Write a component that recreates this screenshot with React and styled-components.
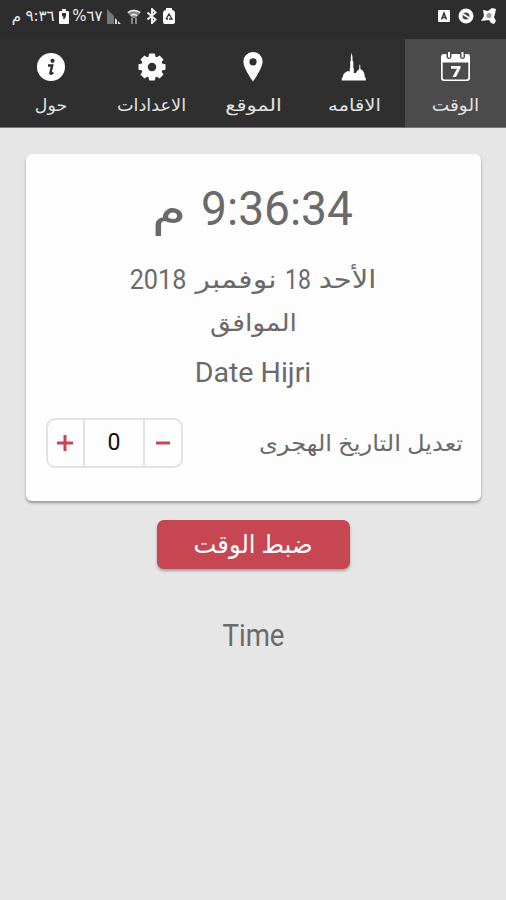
import React from 'react';
import styled, { createGlobalStyle } from 'styled-components';

const GlobalStyle = createGlobalStyle`
  * {
    box-sizing: border-box;
  }
  body {
    margin: 0;
    background-color: #e6e6e6;
    font-family: Roboto, 'DejaVu Sans', sans-serif;
  }
  button {
    padding: 0;
    border: 0;
    background: none;
    font: inherit;
  }
`;

const tabs = [
  { id: 'time', label: 'الوقت', width: 47, stretch: 1.09, active: true },
  { id: 'iqama', label: 'الاقامه', width: 53, stretch: 1.15 },
  { id: 'location', label: 'الموقع', width: 57, stretch: 1.24 },
  { id: 'settings', label: 'الاعدادات', width: 69, stretch: 1.04 },
  { id: 'about', label: 'حول', width: 32, stretch: 1.02 },
];

const TabIcon = ({ id }) => {
  switch (id) {
    case 'time':
      return (
        <Icon width="32" height="32" viewBox="0 0 32 32">
          <path d="M5 3h24q2 0 2 3v21q0 3-3 3H5q-3 0-3-3V6q0-3 3-3z" />
          <path fill="#4b4b4b" d="M3.700 11.500h25.600v15.200q0 1.800-2 1.800H5.700q-2 0-2-1.800z" />
          <path fill="#4b4b4b" d="M7.500 2h5v4q-.5 2-2.500 2T7.500 6zM21 2h5v4q-.5 2-2.500 2T21 6z" />
          <path d="M9 1h2v5.500H9zM22.500 1h2v5.500h-2z" />
          <path d="M12 15h9.500v2l-4.500 9h-3.500l4.500-8.200h-6z" />
        </Icon>
      );
    case 'iqama':
      return (
        <Icon width="32" height="32" viewBox="0 0 32 32">
          <path d="M13.500 1.500l1 4.500v4h.8v7h.5v5h2q.7-2 3.500-4v-3.500l.5-1 .5 1V18q4.500 2 4.500 8l1 1v2.500H3.800V27l1-1q0-4 5-6l2 .5V17h.4v-7h.6V6z" />
        </Icon>
      );
    case 'location':
      return (
        <Icon width="32" height="32" viewBox="0 0 32 32">
          <path
            fillRule="evenodd"
            d="M16 1a9.6 9.6 0 0 0-9.6 9.6C6.400 17.500 16 30.500 16 30.500s9.600-13 9.600-19.900A9.600 9.600 0 0 0 16 1zm0 6.200a3.600 3.600 0 1 1 0 7.200 3.600 3.600 0 0 1 0-7.200z"
          />
        </Icon>
      );
    case 'settings':
      return (
        <Icon width="32" height="32" viewBox="0 0 32 32">
          <circle cx="16" cy="16" r="7.500" fill="none" stroke="#fff" strokeWidth="6.500" />
          {[0, 45, 90, 135, 180, 225, 270, 315].map((angle) => (
            <path key={angle} d="M13.200 2.500h5.600l1 5h-7.600z" transform={`rotate(${angle} 16 16)`} />
          ))}
        </Icon>
      );
    default:
      return (
        <Icon width="32" height="32" viewBox="0 0 32 32">
          <circle cx="16" cy="16" r="14" />
          <circle cx="17.500" cy="9.800" r="2.100" fill="#2f2f2f" />
          <path
            d="M13 14.500h4.200l-1.800 7.500q-.3 1.600 2.900-.2"
            fill="none"
            stroke="#2f2f2f"
            strokeWidth="2.400"
          />
        </Icon>
      );
  }
};

const BatteryIcon = () => (
  <Icon width="10" height="15" viewBox="0 0 10 15">
    <path d="M3 0h4v2h2q1 0 1 1v11q0 1-1 1H1q-1 0-1-1V3q0-1 1-1h2z" />
    <path fill="#2f2f2f" d="M3 4h4v3L5.500 10H4l.5-2L3 7z" />
  </Icon>
);

const SignalIcon = () => (
  <Icon width="16" height="15" viewBox="0 0 16 15">
    <path fill="#777" d="M1 0l7 7v8H1z" />
    <path fill="#ddd" d="M9 9l2 2v4H9zM12 12l3 3h-3z" />
  </Icon>
);

const WifiIcon = () => (
  <Icon width="14" height="15" viewBox="0 0 14 15">
    <path fill="#888" d="M0 3q7-5 14 0L9 9H5z" />
    <path fill="none" stroke="#eee" strokeWidth="1.400" d="M1 3.500q6-4 12 0M4 6.500q3-2 6 0" />
    <path fill="#888" d="M4 9h2v6H4zM8 9h2v6H8z" />
  </Icon>
);

const BluetoothIcon = () => (
  <Icon width="12" height="16" viewBox="0 0 12 16">
    <path fill="none" stroke="#eee" strokeWidth="2" d="M1.500 4.500l8 7L6 15V1l3.500 3.500-8 7" />
  </Icon>
);

const RecycleBatteryIcon = () => (
  <Icon width="12" height="16" viewBox="0 0 12 16">
    <path d="M3 0h6v2h1q2 1 2 3v9q0 2-2 2H2q-2 0-2-2V5q0-2 2-3h1z" />
    <path fill="none" stroke="#333" strokeWidth="1.300" d="M3 11l3-5 3 5H6M3 11h2" />
  </Icon>
);

const Notifications = () => (
  <Icon width="60" height="18" viewBox="0 0 60 18">
    <rect y="3" width="12" height="12" rx="1" />
    <path fill="none" stroke="#333" strokeWidth="1.500" d="M3.500 12.500L6 6l2.500 6.500M4.500 10.500h3" />
    <circle cx="28" cy="9" r="5.500" fill="#444" stroke="#fff" strokeWidth="4" />
    <path fill="none" stroke="#fff" strokeWidth="1.800" d="M24 6.500l8 5" />
    <path d="M45 3l5 1 4-3 4 1-1 5-1 3 2 4-2 3-3-1-2-3-8 1 3-5z" />
    <circle cx="51" cy="8.500" r="2.500" fill="#999" />
  </Icon>
);

const App = () => (
  <>
    <GlobalStyle />
    <Screen dir="rtl">
      <StatusBar dir="ltr">
        <StatusGroup>
          <StatusText $width={9}>م</StatusText>
          <StatusText $width={28}>٩:٣٦</StatusText>
          <BatteryIcon />
          <StatusText $width={27}><bdo dir="ltr">%٦٧</bdo></StatusText>
          <SignalIcon />
          <WifiIcon />
          <BluetoothIcon />
          <RecycleBatteryIcon />
        </StatusGroup>
        <Notifications />
      </StatusBar>

      <TabBar>
        {tabs.map((tab) => (
          <Tab key={tab.id} type="button" $active={tab.active}>
            <TabIcon id={tab.id} />
            <Word $width={tab.width} $size={17} $stretch={tab.stretch}>{tab.label}</Word>
          </Tab>
        ))}
      </TabBar>

      <Card>
        <Line $height={56} $gap={15}>
          <Word $width={154} $size={48} $stretch={0.96} dir="ltr">9:36:34</Word>
          <Word $width={32} $size={46} $stretch={1.22}>م</Word>
        </Line>
        <DateLine>
          <Word $width={57} $size={25} $stretch={1.16}>الأحد</Word>
          <Word $width={24} $size={28} $stretch={0.82} dir="ltr">18</Word>
          <Word $width={82} $size={25} $stretch={1.2}>نوفمبر</Word>
          <Word $width={56} $size={28} $stretch={0.9} dir="ltr">2018</Word>
        </DateLine>
        <Line $height={42}>
          <Word $width={87} $size={24} $stretch={1.11}>الموافق</Word>
        </Line>
        <Line $height={58}>
          <Word $width={116} $size={28} $stretch={1.02} dir="ltr">Date Hijri</Word>
        </Line>
        <AdjustRow>
          <Word $width={204} $size={22} $stretch={1.1}>تعديل التاريخ الهجرى</Word>
          <Stepper dir="ltr">
            <StepButton type="button">
              <Icon width="16" height="16" viewBox="0 0 16 16">
                <path d="M0 8h16M8 0v16" stroke="#c64752" strokeWidth="3" />
              </Icon>
            </StepButton>
            <StepValue>0</StepValue>
            <StepButton type="button">
              <Icon width="14" height="16" viewBox="0 0 14 16">
                <path d="M0 8h14" stroke="#c64752" strokeWidth="3" />
              </Icon>
            </StepButton>
          </Stepper>
        </AdjustRow>
      </Card>

      <SetButton type="button">
        <Word $width={118} $size={25} $stretch={0.97}>ضبط الوقت</Word>
      </SetButton>
      <TimeLabel>
        <Word $width={61} $size={31} $stretch={0.89} dir="ltr">Time</Word>
      </TimeLabel>
    </Screen>
  </>
);

const Icon = styled.svg`
  display: block;
  flex-shrink: 0;
  fill: #fff;
`;

const Screen = styled.div`
  display: flex;
  flex-direction: column;
  align-items: center;
  width: 506px;
  height: 900px;
  overflow: hidden;
  background-color: #e6e6e6;
  color: #6a6a6a;
`;

const StatusBar = styled.div`
  display: flex;
  justify-content: space-between;
  align-items: flex-start;
  width: 100%;
  height: 39px;
  padding: 7px 8px 0 12px;
  background-color: #2d2d2d;
`;

const StatusGroup = styled.div`
  display: flex;
  align-items: center;
  gap: 5px;
  height: 18px;
`;

const StatusText = styled.span`
  display: flex;
  justify-content: center;
  width: ${(props) => props.$width}px;
  font: 15px/18px 'DejaVu Sans', sans-serif;
  white-space: nowrap;
  color: #eee;
`;

const TabBar = styled.nav`
  display: flex;
  width: 100%;
  height: 89px;
  background-color: #2f2f2f;
  border-bottom: 1px solid #777;
`;

const Tab = styled.button`
  display: flex;
  flex: 1;
  flex-direction: column;
  align-items: center;
  gap: 8px;
  padding-top: 12px;
  line-height: 28px;
  color: #e2e2e2;
  background-color: ${(props) => (props.$active ? '#4b4b4b' : 'transparent')};
`;

const Word = styled.span`
  display: flex;
  justify-content: center;
  flex-shrink: 0;
  width: ${(props) => props.$width}px;
  font-size: ${(props) => props.$size}px;
  white-space: nowrap;
  transform: scaleX(${(props) => props.$stretch || 1});
`;

const Card = styled.section`
  width: 455px;
  height: 347px;
  margin-top: 26px;
  padding-top: 27px;
  border-radius: 6px;
  background-color: #fdfdfd;
  box-shadow: 0 2px 3px rgba(0, 0, 0, 0.35);
`;

const Line = styled.div`
  display: flex;
  justify-content: center;
  align-items: center;
  gap: ${(props) => props.$gap || 0}px;
  height: ${(props) => props.$height}px;
  line-height: ${(props) => props.$height}px;
`;

const DateLine = styled(Line).attrs({ $height: 44, $gap: 9 })`
  margin-top: 21px;
`;

const AdjustRow = styled.div`
  display: flex;
  justify-content: space-between;
  align-items: center;
  height: 50px;
  margin-top: 16px;
  padding: 0 18px 0 20px;
`;

const Stepper = styled.div`
  display: flex;
  width: 137px;
  height: 50px;
  border: 2px solid #e2e2e2;
  border-radius: 9px;
`;

const StepButton = styled.button`
  display: flex;
  flex: 1;
  justify-content: center;
  align-items: center;
`;

const StepValue = styled.div`
  width: 62px;
  border: 2px solid #e2e2e2;
  border-width: 0 2px;
  font-size: 23px;
  line-height: 46px;
  text-align: center;
  color: #111;
`;

const SetButton = styled.button`
  display: flex;
  justify-content: center;
  align-items: center;
  width: 193px;
  height: 49px;
  margin-top: 19px;
  border-radius: 7px;
  background-color: #c64752;
  color: #fff;
  box-shadow: 0 2px 3px rgba(0, 0, 0, 0.3);
`;

const TimeLabel = styled.div`
  margin-top: 47px;
  line-height: 40px;
`;

export default App;
